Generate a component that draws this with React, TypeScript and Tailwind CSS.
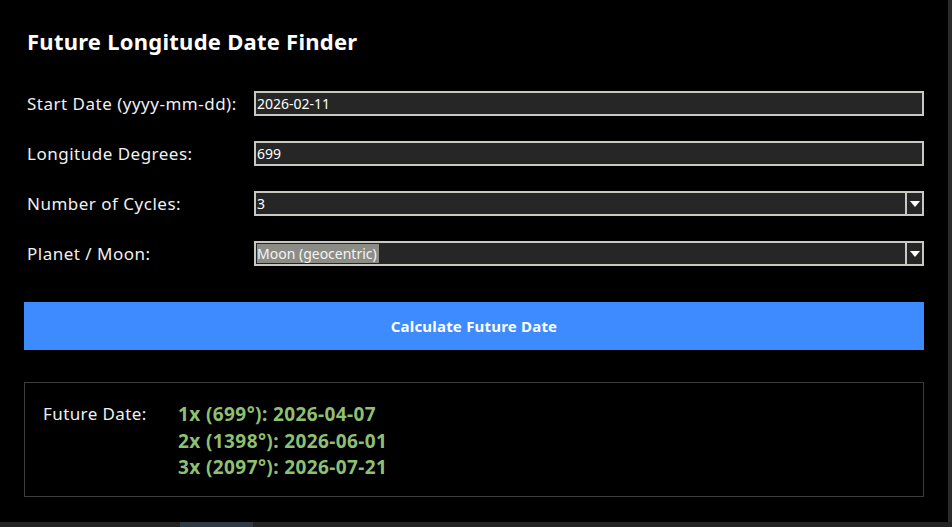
import React from "react";

const font = { fontFamily: '"Noto Sans", "Open Sans", sans-serif' };

function Field({ label, value, select, highlight }: { label: string; value: string; select?: boolean; highlight?: boolean }) {
  return (
    <div className="flex items-center h-[25px]">
      <div className="w-[230px] pl-[3px] text-[17px] tracking-[0.5px] text-[#f0f0f0] leading-none">{label}</div>
      <div className="flex-1 h-[25px] flex border-2 border-[#c9c9c1] bg-[#262626]">
        <div className="flex-1 flex items-center pl-[1px] text-[14px] text-white leading-none">
          {highlight ? (
            <span className="bg-[#8c8c86] text-[#f4f4f4] h-[19px] flex items-center pr-[2px]">{value}</span>
          ) : (
            <span>{value}</span>
          )}
        </div>
        {select && (
          <div className="w-[17px] border-l-2 border-[#c9c9c1] flex items-center justify-center bg-[#262626]">
            <svg width="10" height="6" viewBox="0 0 10 6">
              <polygon points="0,0 10,0 5,6" fill="#ffffff" />
            </svg>
          </div>
        )}
      </div>
    </div>
  );
}

export default function App() {
  return (
    <div className="w-[952px] h-[527px] bg-[#242424] flex flex-col overflow-hidden" style={font}>
      <div className="flex flex-1">
        <div className="flex-1 bg-black pl-[24px] pr-[24px] pt-[26px] flex flex-col">
          <div className="pl-[3px] text-[22px] tracking-[0.25px] font-bold text-white leading-[30px]">Future Longitude Date Finder</div>
          <div className="mt-[35px] flex flex-col gap-[25px]">
            <Field label="Start Date (yyyy-mm-dd):" value="2026-02-11" />
            <Field label="Longitude Degrees:" value="699" />
            <Field label="Number of Cycles:" value="3" select />
            <Field label="Planet / Moon:" value="Moon (geocentric)" select highlight />
          </div>
          <div className="mt-[36px] h-[48px] bg-[#3d8bff] flex items-center justify-center text-white font-bold text-[15px] tracking-[0.2px]">
            Calculate Future Date
          </div>
          <div className="mt-[32px] h-[115px] border border-[#3c3c3c] flex pl-[18px] pt-[18px]">
            <div className="w-[135px] text-[17px] tracking-[0.4px] text-[#f0f0f0] leading-[26px]">Future Date:</div>
            <div className="flex flex-col text-[19px] tracking-[0.4px] font-bold text-[#8fbf70] leading-[26.5px]">
              <div>1x (699°): 2026-04-07</div>
              <div>2x (1398°): 2026-06-01</div>
              <div>3x (2097°): 2026-07-21</div>
            </div>
          </div>
        </div>
        <div className="w-[4px] bg-[#2a2a2a]" />
      </div>
      <div className="h-[5px] flex">
        <div className="w-[180px] bg-[#242424]" />
        <div className="w-[73px] bg-[#2e3b44]" />
        <div className="flex-1 bg-[#242424]" />
      </div>
    </div>
  );
}
